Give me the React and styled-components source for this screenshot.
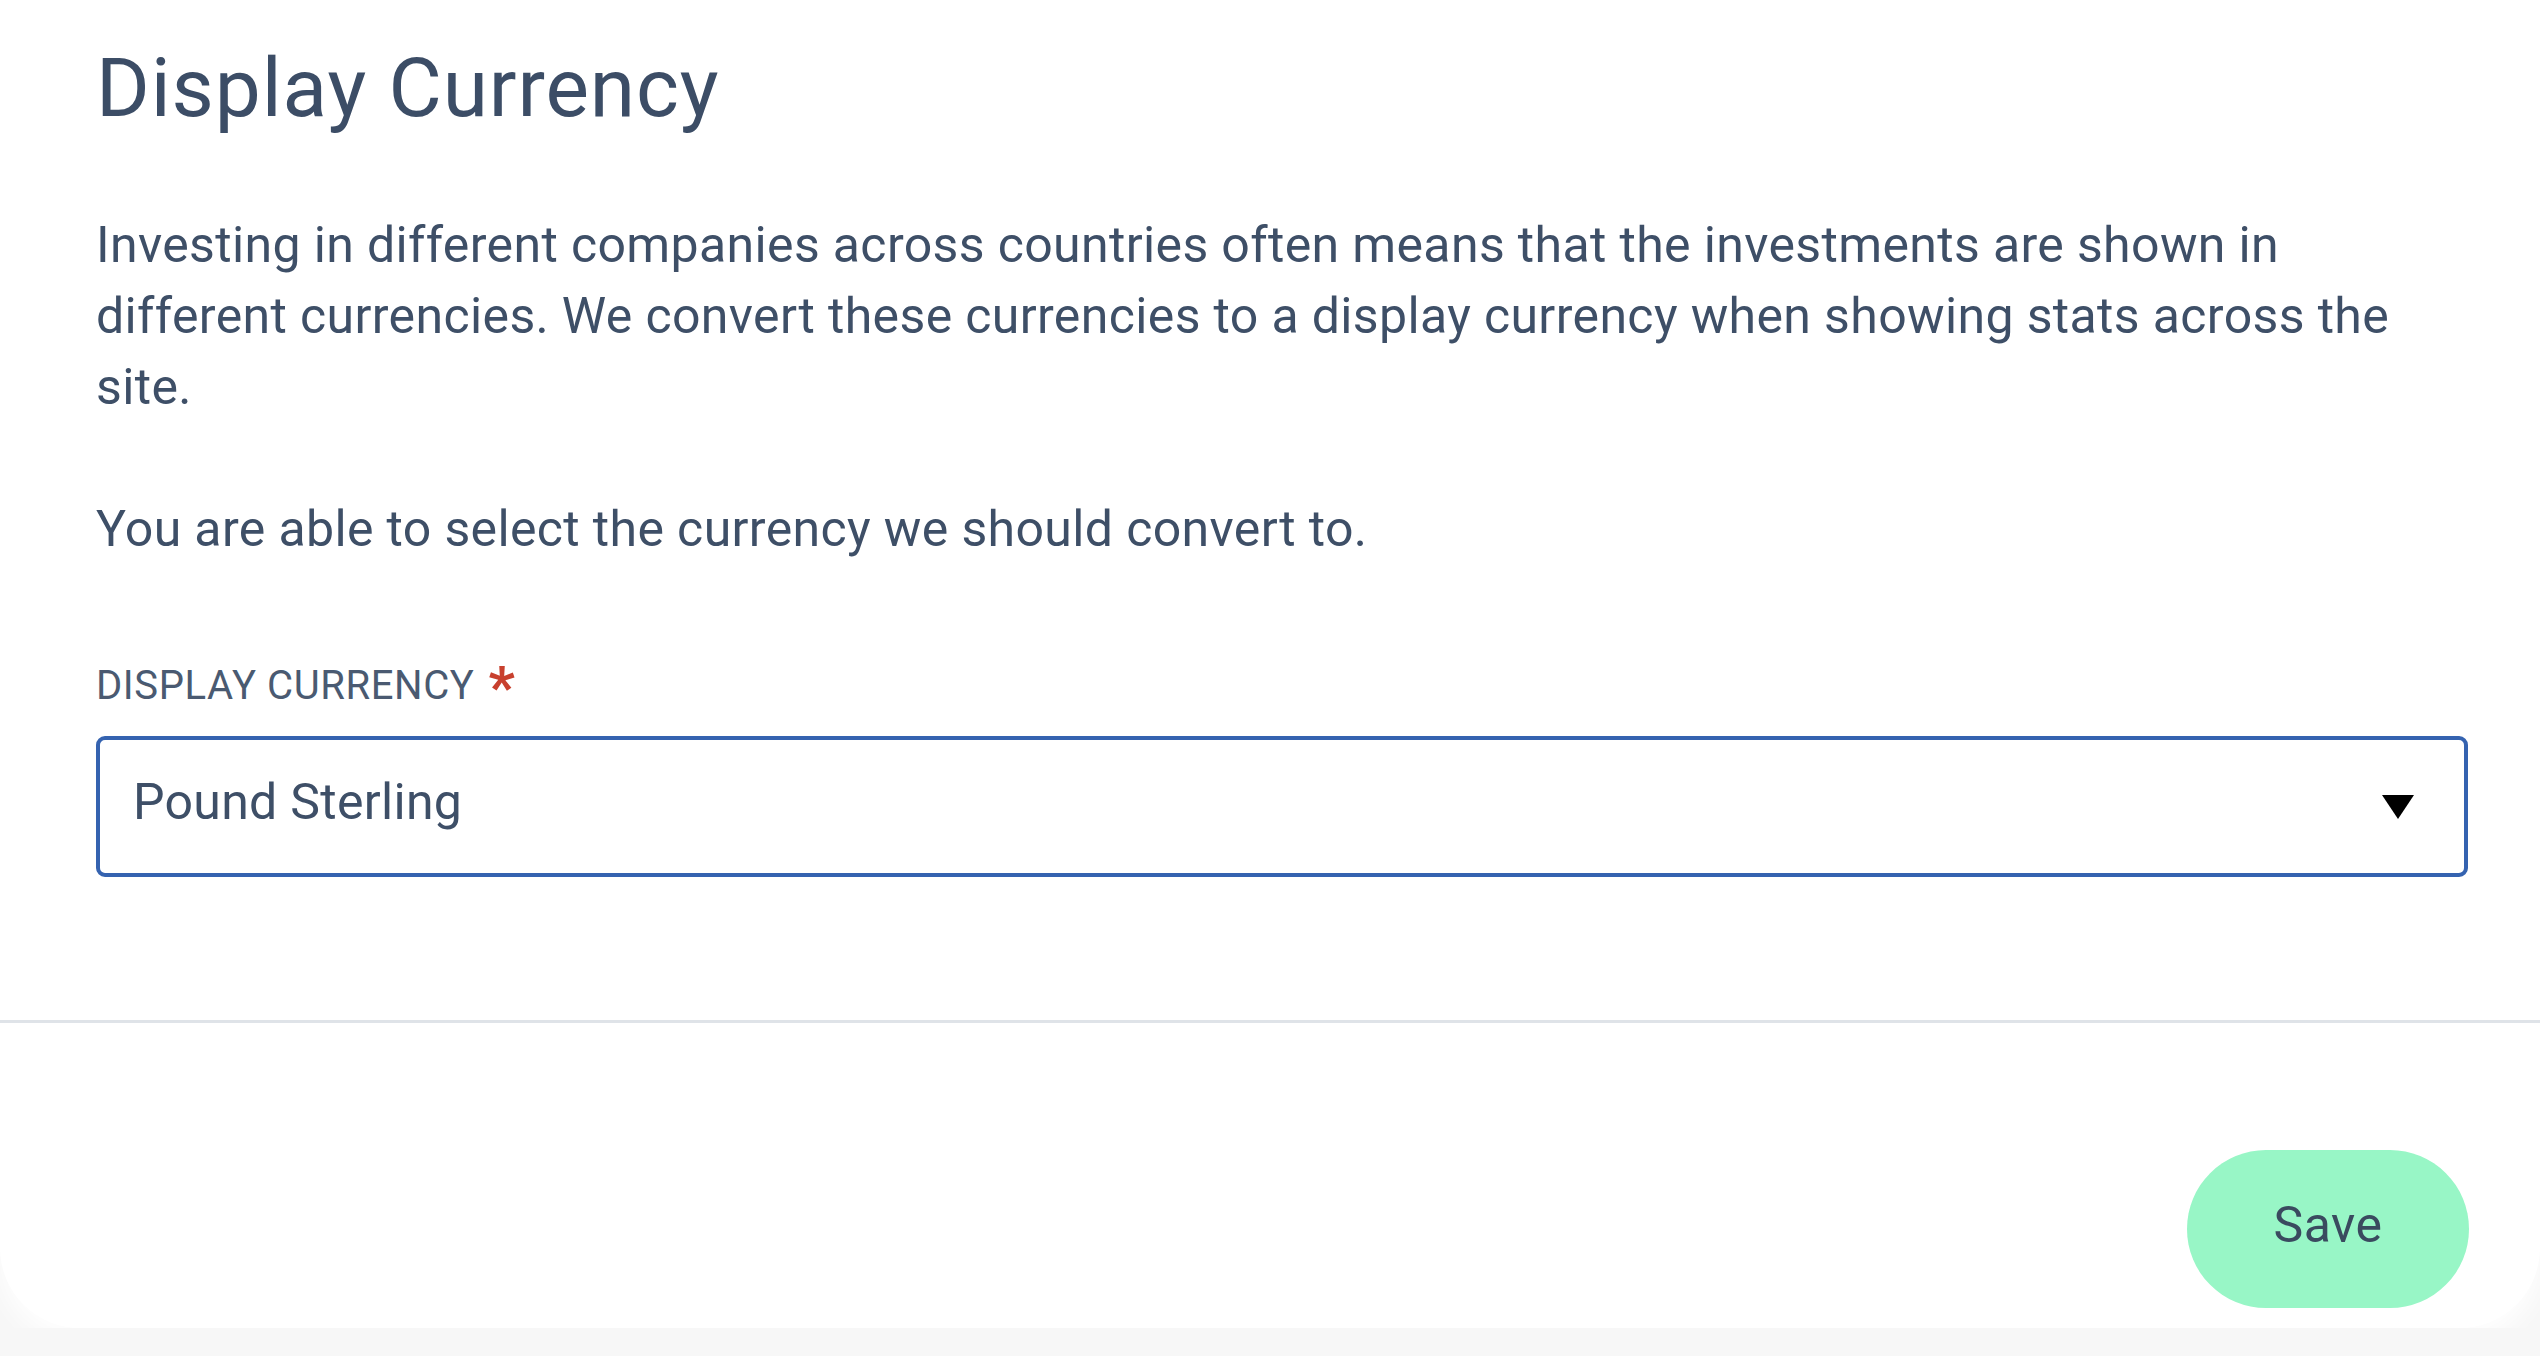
import React from "react";
import styled, { createGlobalStyle } from "styled-components";

const Global = createGlobalStyle`
  html, body { margin: 0; padding: 0; }
  body {
    background: #f7f7f7;
    font-family: Roboto, "Liberation Sans", sans-serif;
    -webkit-font-smoothing: antialiased;
  }
`;

const Card = styled.div`
  background: #ffffff;
  height: 1328px;
  display: flex;
  flex-direction: column;
  border-radius: 0 0 80px 80px;
  box-shadow: 0 14px 24px rgba(255, 255, 255, 0.9);
`;

const Body = styled.div`
  padding: 39px 72px 0 96px;
  display: flex;
  flex-direction: column;
`;

const Title = styled.h1`
  margin: 0;
  font-size: 82px;
  line-height: 98px;
  font-weight: 400;
  color: #3c4d66;
  letter-spacing: 0.9px;
`;

const Paragraph = styled.p`
  margin: ${(p) => p.$top}px 0 0 0;
  font-size: 50px;
  line-height: 71px;
  color: #3e4f67;
  letter-spacing: 0.36px;
`;

const Label = styled.label`
  margin-top: 94px;
  display: flex;
  align-items: baseline;
  gap: 14px;
  font-size: 40px;
  line-height: 48px;
  color: #4a5a71;
  text-transform: uppercase;
  letter-spacing: 0.6px;
`;

const Required = styled.span`
  color: #c8402e;
  font-size: 58px;
  font-weight: 700;
  line-height: 40px;
  position: relative;
  top: 8px;
`;

const Select = styled.div`
  margin-top: 26px;
  box-sizing: border-box;
  height: 141px;
  border: 4px solid #3563b0;
  border-radius: 9px;
  padding: 0 50px 10px 33px;
  display: flex;
  align-items: center;
  justify-content: space-between;
`;

const Value = styled.span`
  font-size: 50px;
  color: #3e4f67;
  letter-spacing: 0.3px;
`;

const Caret = styled.svg`
  width: 32px;
  height: 24px;
  margin-top: 10px;
`;

const Divider = styled.hr`
  margin: 143px 0 0 0;
  border: 0;
  height: 3px;
  background: #dfe3e8;
`;

const Footer = styled.div`
  padding: 127px 71px 0 96px;
  display: flex;
  justify-content: flex-end;
`;

const SaveButton = styled.button`
  width: 282px;
  height: 158px;
  border: 0;
  border-radius: 80px;
  background: #98f6c6;
  color: #3a4a5f;
  font-family: Roboto, "Liberation Sans", sans-serif;
  font-size: 50px;
  letter-spacing: 0.5px;
  padding: 0 0 8px 0;
  cursor: pointer;
`;

export default function App() {
  return (
    <>
      <Global />
      <Card>
        <Body>
          <Title>Display Currency</Title>
          <Paragraph $top={73}>
            Investing in different companies across countries often means that the investments are shown in different currencies. We convert these currencies to a display currency when showing stats across the site.
          </Paragraph>
          <Paragraph $top={71}>You are able to select the currency we should convert to.</Paragraph>
          <Label>
            Display Currency
            <Required>*</Required>
          </Label>
          <Select>
            <Value>Pound Sterling</Value>
            <Caret viewBox="0 0 32 24">
              <path d="M0 0 H32 L16 24 Z" fill="#000" />
            </Caret>
          </Select>
        </Body>
        <Divider />
        <Footer>
          <SaveButton>Save</SaveButton>
        </Footer>
      </Card>
    </>
  );
}
